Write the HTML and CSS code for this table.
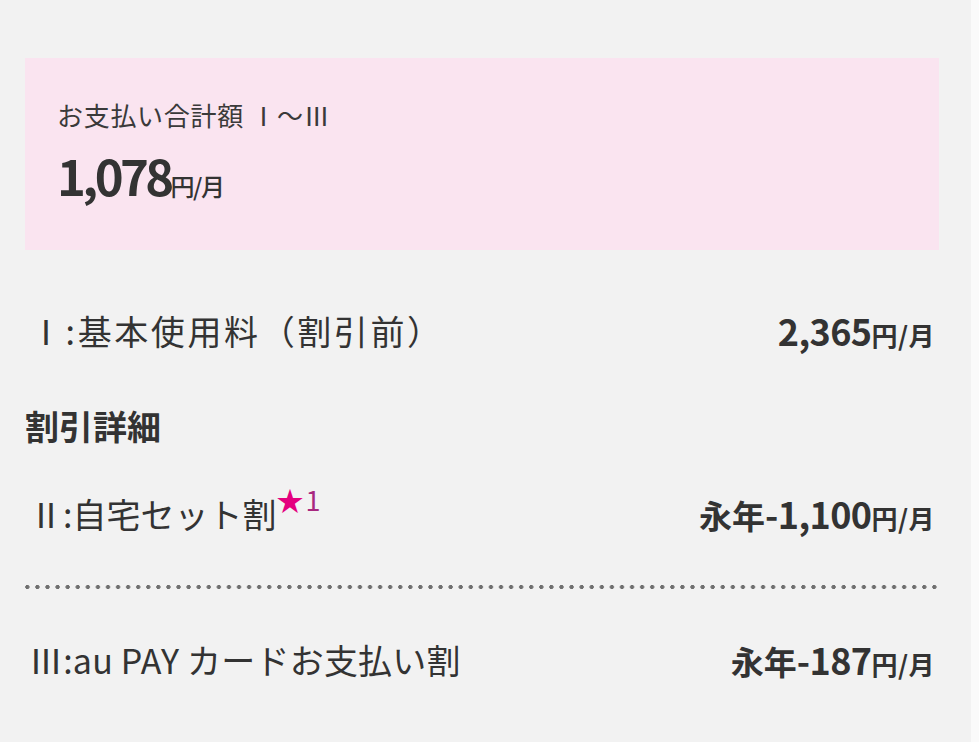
FILE: index.html
```html
<!DOCTYPE html>
<html lang="ja">
<head>
<meta charset="utf-8">
<link rel="stylesheet" href="styles.css">
</head>
<body>
<div class="page">
  <section class="total">
    <p class="total-title">お支払い合計額 Ⅰ～Ⅲ</p>
    <p class="total-amount"><span class="num">1,078</span><span class="unit">円/月</span></p>
  </section>

  <div class="row row-basic">
    <span class="label">Ⅰ:基本使用料（割引前）</span>
    <span class="value"><span class="num">2,365</span><span class="unit">円/月</span></span>
  </div>

  <h2 class="section-title">割引詳細</h2>

  <div class="row row-home">
    <span class="label">Ⅱ:自宅セット割<sup class="note"><span class="star">★</span><span class="note-num">1</span></sup></span>
    <span class="value">永年<span class="num">-1,100</span><span class="unit">円/月</span></span>
  </div>

  <div class="dots"></div>

  <div class="row row-card">
    <span class="label">Ⅲ:au PAY カードお支払い割</span>
    <span class="value">永年<span class="num">-187</span><span class="unit">円/月</span></span>
  </div>
</div>
</body>
</html>
```

FILE: styles.css
```css
html {
  background: #fafafa;
}
body {
  margin: 0;
  font-family: "Noto Sans CJK JP", "Noto Sans", sans-serif;
  color: #333333;
}
.page {
  width: 971px;
  min-height: 742px;
  box-sizing: border-box;
  background: #f2f2f2;
  padding: 58px 32px 0 25px;
}
.total {
  background: #fae4f0;
  padding: 37px 32px 45px 32px;
}
.total-title {
  margin: 0;
  font-size: 26px;
  line-height: 39px;
  letter-spacing: 0.7px;
  color: #3a3a3a;
}
.total-amount {
  margin: 11px 0 0 0;
  line-height: 60px;
  height: 60px;
  font-weight: 700;
  white-space: nowrap;
}
.total-amount .num {
  font-size: 49px;
  letter-spacing: -3.6px;
}
.total-amount .unit {
  font-size: 24px;
  font-weight: 500;
  letter-spacing: -1.5px;
}
.row {
  display: flex;
  justify-content: space-between;
  align-items: center;
  height: 48px;
  padding: 0 4px 0 4px;
  font-size: 34px;
}
.row-basic {
  margin-top: 56px;
}
.row-basic .label {
  letter-spacing: 2.6px;
}
.row-home {
  margin-top: 39px;
}
.row-card {
  margin-top: 46px;
}
.label {
  white-space: nowrap;
  letter-spacing: 0;
}
.row-card .label {
  letter-spacing: 0.2px;
}
.value {
  font-weight: 700;
  white-space: nowrap;
  font-size: 33px;
  letter-spacing: 0;
}
.value .num {
  font-size: 36px;
  letter-spacing: -0.6px;
}
.value .unit {
  font-size: 26px;
  letter-spacing: 0.5px;
}
.section-title {
  margin: 48px 0 0 0;
  font-size: 34px;
  line-height: 48px;
  font-weight: 700;
}
.note {
  font-size: 27px;
  line-height: 0;
  vertical-align: 17px;
  letter-spacing: 0;
}
.star {
  color: #e4007f;
}
.note-num {
  color: #a8287f;
  margin-left: 2px;
}
.dots {
  height: 4px;
  margin-top: 48px;
  background-image: radial-gradient(circle, #6f6f6f 1.8px, rgba(111,111,111,0) 2.4px);
  background-size: 10.09px 4px;
  background-position: -2.7px 0;
  background-repeat: repeat-x;
}
```
